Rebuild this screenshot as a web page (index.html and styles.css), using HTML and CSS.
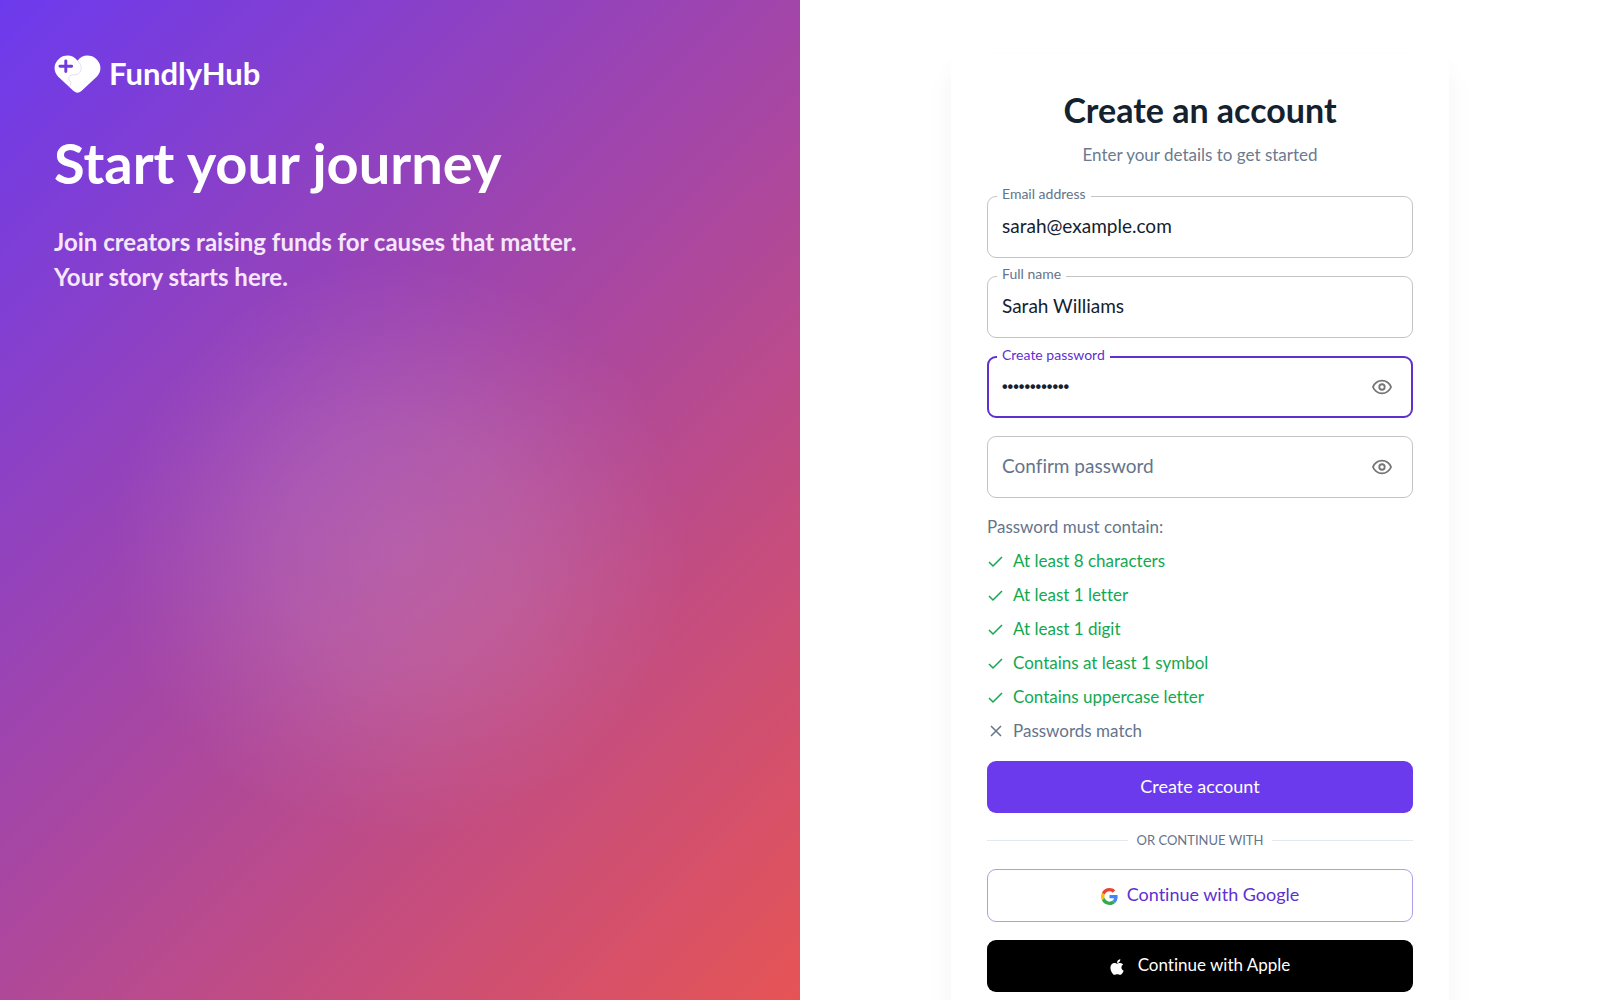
FILE: index.html
```html
<!DOCTYPE html>
<html lang="en">

<head>
    <meta charset="UTF-8">
    <meta name="viewport" content="width=device-width, initial-scale=1">

    <title>Create an account - FundlyHub</title>
    <link rel="stylesheet" href="styles.css">
</head>

<body>
    <svg width="0" height="0" class="sprite" aria-hidden="true">
        <symbol id="eye" viewBox="0 0 22 16">
            <path d="M1 8c2-4.500 5.500-7 10-7s8 2.500 10 7c-2 4.500-5.500 7-10 7s-8-2.500-10-7z" />
            <circle cx="11" cy="8" r="3" />
        </symbol>
        <symbol id="check" viewBox="0 0 18 18">
            <path d="M2 10l4 4L15 5" />
        </symbol>
        <symbol id="cross" viewBox="0 0 18 18">
            <path d="M4 4l10 10M14 4L4 14" />
        </symbol>
    </svg>
    <main class="page">
        <section class="hero">
            <a class="brand" href="/">
                <svg class="brand-mark" viewBox="0 0 48 40" aria-hidden="true">
                    <path class="heart" d="M24 6C20 0 12-1 6 3C-1 8-1 17 4 22L20 37Q24 40.500 28 37L44 22C49 17 49 8 42 3C36-1 28 0 24 6z" />
                    <path class="crack" d="M24 6C29 10 29 16 25 19C21 22 16 18 15 24C15 27 18 26 17 30L16 33" />
                    <path class="plus" d="M12 6v11M6 11.500h12" />
                </svg>
                <span>FundlyHub</span>
            </a>
            <h1 class="hero-title">Start your journey</h1>
            <p class="hero-text">Join creators raising funds for causes that matter. Your story starts here.</p>
        </section>

        <section class="signup">
            <form class="card" action="javascript:;">
                <h2 class="card-title">Create an account</h2>
                <p class="card-subtitle">Enter your details to get started</p>

                <div class="fields">
                    <div class="field">
                        <input type="email" id="email" name="email" value="sarah@example.com">
                        <label for="email">Email address</label>
                    </div>
                    <div class="field">
                        <input type="text" id="name" name="name" value="Sarah Williams">
                        <label for="name">Full name</label>
                    </div>
                    <div class="field active">
                        <input type="password" class="masked" id="password" name="password" value="Example#1234">
                        <label for="password">Create password</label>
                        <button type="button" class="toggle" aria-label="Show password"><svg><use href="#eye" /></svg></button>
                    </div>
                    <div class="field">
                        <input type="password" id="confirm" name="confirm" placeholder="Confirm password" aria-label="Confirm password">
                        <button type="button" class="toggle" aria-label="Show password"><svg><use href="#eye" /></svg></button>
                    </div>
                </div>

                <p class="rules-title">Password must contain:</p>
                <ul class="rules">
                    <li class="ok"><svg><use href="#check" /></svg>At least 8 characters</li>
                    <li class="ok"><svg><use href="#check" /></svg>At least 1 letter</li>
                    <li class="ok"><svg><use href="#check" /></svg>At least 1 digit</li>
                    <li class="ok"><svg><use href="#check" /></svg>Contains at least 1 symbol</li>
                    <li class="ok"><svg><use href="#check" /></svg>Contains uppercase letter</li>
                    <li><svg><use href="#cross" /></svg>Passwords match</li>
                </ul>

                <button type="submit" class="btn primary">Create account</button>
                <div class="divider"><span>OR CONTINUE WITH</span></div>
                <button type="button" class="btn google">
                    <svg viewBox="0 0 48 48" aria-hidden="true">
                        <path fill="#EA4335" d="M24 9.500c3.540 0 6.710 1.220 9.210 3.600l6.850-6.850C35.900 2.380 30.470 0 24 0 14.620 0 6.510 5.380 2.560 13.220l7.980 6.190C12.430 13.720 17.740 9.500 24 9.500z" />
                        <path fill="#4285F4" d="M46.980 24.550c0-1.570-.15-3.090-.38-4.550H24v9.020h12.940c-.58 2.960-2.260 5.480-4.780 7.180l7.730 6c4.510-4.180 7.090-10.360 7.090-17.650z" />
                        <path fill="#FBBC05" d="M10.530 28.590c-.48-1.450-.76-2.990-.76-4.590s.27-3.140.76-4.590l-7.980-6.190C.92 16.460 0 20.120 0 24s.92 7.540 2.560 10.780l7.970-6.190z" />
                        <path fill="#34A853" d="M24 48c6.480 0 11.930-2.130 15.890-5.810l-7.730-6c-2.150 1.450-4.920 2.300-8.160 2.300-6.260 0-11.570-4.220-13.470-9.910l-7.980 6.190C6.510 42.620 14.620 48 24 48z" />
                    </svg>
                    Continue with Google
                </button>
                <button type="button" class="btn apple">
                    <svg viewBox="0 0 384 512" aria-hidden="true">
                        <path fill="currentColor" d="M318.700 268.700c-.2-36.700 16.400-64.400 50-84.800-18.800-26.900-47.200-41.700-84.700-44.600-35.500-2.800-74.300 20.700-88.500 20.700-15 0-49.400-19.700-76.400-19.700C63.300 141.200 4 184.800 4 273.500q0 39.300 14.400 81.200c12.800 36.700 59 126.700 107.200 125.200 25.200-.6 43-17.900 75.800-17.900 31.800 0 48.300 17.900 76.400 17.900 48.600-.7 90.400-82.500 102.600-119.300-65.200-30.700-61.700-90-61.700-91.900zm-56.600-164.200c27.300-32.400 24.800-61.900 24-72.500-24.100 1.400-52 16.400-67.900 34.900-17.500 19.800-27.800 44.300-25.600 71.900 26.100 2 49.900-11.400 69.500-34.300z" />
                    </svg>
                    Continue with Apple
                </button>
            </form>
        </section>
    </main>
</body>

</html>
```
FILE: styles.css
```css
* {
    box-sizing: border-box;
}

body {
    margin: 0;
    font-family: Lato, "Open Sans", sans-serif;
    font-variant-ligatures: none;
    color: #14212e;
    background-color: #fff;
}

h1,
h2,
p,
ul {
    margin: 0;
    padding: 0;
}

input,
button {
    font-family: inherit;
    font-variant-ligatures: none;
}

.sprite {
    position: absolute;
}

.page {
    display: grid;
    grid-template-columns: 1fr 1fr;
    height: 100vh;
}

.hero {
    padding: 54px;
    color: #fff;
    background: radial-gradient(circle at 50% 55%, rgba(255, 255, 255, 0.13), rgba(255, 255, 255, 0.1) 120px, rgba(255, 255, 255, 0.03) 230px, transparent 290px),
        linear-gradient(135deg, #6c3aed, #e65455);
}

.brand {
    display: flex;
    align-items: center;
    gap: 8px;
    height: 40px;
    color: #fff;
    font-size: 31px;
    line-height: 36px;
    font-weight: 700;
    text-decoration: none;
}

.brand span {
    padding-bottom: 2px;
}

.brand-mark {
    width: 47px;
    height: 39px;
}

.heart {
    fill: #fff;
}

.crack {
    fill: none;
    stroke: #e2dcf2;
}

.plus {
    fill: none;
    stroke: #6f3be0;
    stroke-width: 3;
    stroke-linecap: round;
}

.hero-title {
    margin-top: 36px;
    font-size: 56px;
    line-height: 66px;
    font-weight: 700;
}

.hero-text {
    max-width: 560px;
    margin-top: 28px;
    font-size: 24px;
    line-height: 35px;
    font-weight: 700;
    color: #f6e6fb;
}

.signup {
    overflow-y: auto;
    scrollbar-width: none;
    padding: 54px 36px;
}

.card {
    max-width: 498px;
    margin: 0 auto;
    padding: 36px;
    border-radius: 14px;
    background-color: #fff;
    box-shadow: 0 18px 28px rgba(0, 0, 0, 0.05);
}

.card-title {
    font-size: 34px;
    line-height: 40px;
    font-weight: 700;
    text-align: center;
}

.card-subtitle {
    margin-top: 12px;
    font-size: 17px;
    line-height: 26px;
    text-align: center;
    color: #6b7a90;
}

.fields {
    display: grid;
    gap: 18px;
    margin-top: 28px;
}

.field {
    position: relative;
    display: flex;
    align-items: center;
    height: 62px;
    border: 1px solid #c4c4c4;
    border-radius: 9px;
    padding: 0 14px;
}

.field.active {
    border: 2px solid #5f2fd0;
    padding: 0 13px;
}

.field input {
    flex: 1;
    min-width: 0;
    padding: 0 0 3px;
    border: none;
    outline: none;
    background: none;
    font-size: 19px;
    color: #14212e;
}

.field input::placeholder {
    color: #64748b;
    opacity: 1;
}

.field .masked {
    padding: 0;
    font-family: "Liberation Sans", sans-serif;
    font-size: 16px;
    font-weight: 700;
}

.field label {
    position: absolute;
    top: -12px;
    left: 9px;
    padding: 0 5px;
    font-size: 14px;
    line-height: 18px;
    color: #64748b;
    background-color: #fff;
}

.field.active label {
    left: 8px;
    color: #5f2fd0;
}

.toggle {
    display: flex;
    padding: 6px;
    border: none;
    background: none;
    color: #757575;
}

.toggle svg {
    width: 20px;
    height: 16px;
    fill: none;
    stroke: currentColor;
    stroke-width: 2;
}

.rules-title {
    margin-top: 16px;
    font-size: 17px;
    line-height: 26px;
    color: #64748b;
}

.rules {
    display: grid;
    gap: 8px;
    margin-top: 8px;
    list-style: none;
    font-size: 17px;
    line-height: 26px;
    color: #64748b;
}

.rules li {
    display: flex;
    align-items: center;
    gap: 8px;
}

.rules svg {
    width: 18px;
    height: 18px;
    fill: none;
    stroke: currentColor;
    stroke-width: 1.5;
}

.rules .ok {
    color: #12a84f;
}

.btn {
    display: flex;
    align-items: center;
    justify-content: center;
    width: 100%;
    height: 52px;
    padding: 0 0 3px;
    border: none;
    border-radius: 9px;
    font-size: 17px;
    color: #fff;
}

.btn svg {
    margin-top: 4px;
}

.primary {
    margin-top: 17px;
    background-color: #6c3aed;
    font-size: 18px;
}

.divider {
    display: flex;
    align-items: center;
    gap: 9px;
    margin: 17px 0 19px;
    font-size: 13px;
    line-height: 20px;
    color: #64748b;
}

.divider::before,
.divider::after {
    content: "";
    flex: 1;
    height: 1px;
    background-color: #e2e8f0;
}

.google {
    gap: 9px;
    height: 53px;
    border: 1px solid #b19cec;
    background-color: #fff;
    color: #5f2fd0;
    font-size: 18px;
}

.google svg {
    width: 17px;
    height: 17px;
}

.apple {
    gap: 14px;
    margin-top: 18px;
    background-color: #000;
}

.apple svg {
    width: 14px;
    height: 18px;
}
```
